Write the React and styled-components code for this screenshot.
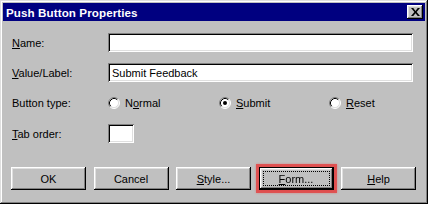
import React from "react";
import styled, { createGlobalStyle, css } from "styled-components";

const GlobalStyle = createGlobalStyle`
  html, body {
    margin: 0;
    padding: 0;
    background: #c0c0c0;
  }
  body {
    font-family: "Liberation Sans", Arial, sans-serif;
    font-size: 11px;
    color: #000;
  }
`;

const raised = css`
  box-shadow: inset -1px -1px 0 #000, inset 1px 1px 0 #fff,
    inset -2px -2px 0 #808080, inset 2px 2px 0 #dfdfdf;
`;

const sunken = css`
  box-shadow: inset 1px 1px 0 #808080, inset -1px -1px 0 #fff,
    inset 2px 2px 0 #000, inset -2px -2px 0 #dfdfdf;
`;

const Window = styled.div`
  box-sizing: border-box;
  width: 428px;
  height: 204px;
  padding: 3px;
  background: #c0c0c0;
  box-shadow: inset -1px -1px 0 #000, inset 1px 1px 0 #dfdfdf,
    inset -2px -2px 0 #808080, inset 2px 2px 0 #fff;
  display: flex;
  flex-direction: column;
`;

const TitleBar = styled.div`
  height: 18px;
  background: #000080;
  display: flex;
  align-items: center;
  justify-content: space-between;
  padding: 0 2px 0 3px;
`;

const Title = styled.span`
  color: #fff;
  font-weight: bold;
  font-size: 11.6px;
  letter-spacing: 0.1px;
`;

const CloseButton = styled.div`
  width: 16px;
  height: 14px;
  background: #c0c0c0;
  ${raised};
  display: flex;
  align-items: center;
  justify-content: center;
`;

const Body = styled.div`
  flex: 1;
  padding: 12px 9px 0 8px;
  display: flex;
  flex-direction: column;
`;

const Row = styled.div`
  display: grid;
  grid-template-columns: 97px 1fr;
  align-items: center;
  height: 19px;
  margin-bottom: ${(p) => p.gap || 11}px;
  margin-right: 3px;
`;

const Label = styled.span`
  padding-left: 1px;
`;

const Key = styled.u`
  text-decoration: underline;
`;

const Field = styled.div`
  box-sizing: border-box;
  height: 19px;
  width: ${(p) => p.width || "100%"};
  background: #fff;
  ${sunken};
  padding: 0 4px;
  display: flex;
  align-items: center;
`;

const Options = styled.div`
  display: grid;
  grid-template-columns: 111px 110px 1fr;
`;

const Option = styled.label`
  display: flex;
  align-items: center;
  gap: 5px;
`;

const Buttons = styled.div`
  margin-top: 13px;
  display: flex;
  justify-content: space-between;
`;

const Button = styled.div`
  box-sizing: border-box;
  width: 75px;
  height: 23px;
  background: #c0c0c0;
  ${raised};
  display: flex;
  align-items: center;
  justify-content: center;
  position: relative;
  ${(p) =>
    p.$default &&
    css`
      box-shadow: inset 0 0 0 1px #000, inset -2px -2px 0 #000,
        inset 2px 2px 0 #fff, inset -3px -3px 0 #808080,
        inset 3px 3px 0 #dfdfdf;
      outline: 3px solid rgba(226, 70, 70, 0.85);
      filter: drop-shadow(0 0 1px rgba(230, 80, 80, 0.6));
    `}
`;

const Focus = styled.span`
  position: absolute;
  inset: 4px;
  border: 1px dotted #000;
`;

const ButtonText = styled.span`
  position: relative;
`;

function Radio({ checked }) {
  return (
    <svg width="12" height="12" viewBox="0 0 12 12">
      <circle cx="6" cy="6" r="5" fill="#fff" />
      <path d="M2.11 9.89 A5.5 5.5 0 0 1 9.89 2.11" stroke="#808080" fill="none" />
      <path d="M9.89 2.11 A5.5 5.5 0 0 1 2.11 9.89" stroke="#fff" fill="none" />
      <path d="M2.82 9.18 A4.5 4.5 0 0 1 9.18 2.82" stroke="#000" fill="none" />
      <path d="M9.18 2.82 A4.5 4.5 0 0 1 2.82 9.18" stroke="#dfdfdf" fill="none" />
      {checked && <circle cx="6" cy="6" r="2" fill="#000" />}
    </svg>
  );
}

function CloseIcon() {
  return (
    <svg width="9" height="8" viewBox="0 0 8 7">
      <path d="M0 0 L2 0 L4 2.5 L6 0 L8 0 L5 3.5 L8 7 L6 7 L4 4.5 L2 7 L0 7 L3 3.5 Z" fill="#000" />
    </svg>
  );
}

export default function App() {
  return (
    <>
      <GlobalStyle />
      <Window>
        <TitleBar>
          <Title>Push Button Properties</Title>
          <CloseButton>
            <CloseIcon />
          </CloseButton>
        </TitleBar>
        <Body>
          <Row>
            <Label>
              <Key>N</Key>ame:
            </Label>
            <Field />
          </Row>
          <Row>
            <Label>
              <Key>V</Key>alue/Label:
            </Label>
            <Field>Submit Feedback</Field>
          </Row>
          <Row gap={12}>
            <Label>Button type:</Label>
            <Options>
              <Option>
                <Radio />
                <span>
                  N<Key>o</Key>rmal
                </span>
              </Option>
              <Option>
                <Radio checked />
                <span>
                  <Key>S</Key>ubmit
                </span>
              </Option>
              <Option>
                <Radio />
                <span>
                  <Key>R</Key>eset
                </span>
              </Option>
            </Options>
          </Row>
          <Row>
            <Label>
              <Key>T</Key>ab order:
            </Label>
            <Field width="26px" />
          </Row>
          <Buttons>
            <Button>OK</Button>
            <Button>Cancel</Button>
            <Button>
              <ButtonText>
                <Key>S</Key>tyle...
              </ButtonText>
            </Button>
            <Button $default>
              <Focus />
              <ButtonText>
                <Key>F</Key>orm...
              </ButtonText>
            </Button>
            <Button>
              <ButtonText>
                <Key>H</Key>elp
              </ButtonText>
            </Button>
          </Buttons>
        </Body>
      </Window>
    </>
  );
}
